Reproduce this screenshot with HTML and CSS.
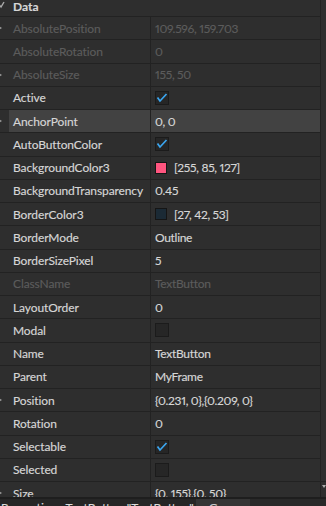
FILE: index.html
```html
<!DOCTYPE html>
<html>
<head>
<meta charset="utf-8">
<link rel="stylesheet" href="styles.css">
</head>
<body>
<div class="panel">
  <div class="list">
    <div class="header">
      <span class="chev"><svg width="9" height="10" viewBox="0 0 9 10"><polyline points="-3,2 1,7 4,2" fill="none" stroke="#aaaaaa" stroke-width="1.4"/></svg></span>
      <span class="title">Data</span>
    </div>
    <div class="row off"><span class="exp"><i></i></span><span class="name">AbsolutePosition</span><span class="val">109.596, 159.703</span></div>
    <div class="row off"><span class="exp"></span><span class="name">AbsoluteRotation</span><span class="val">0</span></div>
    <div class="row off"><span class="exp"><i></i></span><span class="name">AbsoluteSize</span><span class="val">155, 50</span></div>
    <div class="row"><span class="exp"></span><span class="name">Active</span><span class="val"><span class="box"><svg width="12" height="12" viewBox="0 0 12 12"><polyline points="1.5,5.5 4,9 10.5,2" fill="none" stroke="#3ba6f0" stroke-width="1.7"/></svg></span></span></div>
    <div class="row hover"><span class="exp"><i></i></span><span class="name">AnchorPoint</span><span class="val">0, 0</span></div>
    <div class="row"><span class="exp"></span><span class="name">AutoButtonColor</span><span class="val"><span class="box"><svg width="12" height="12" viewBox="0 0 12 12"><polyline points="1.5,5.5 4,9 10.5,2" fill="none" stroke="#3ba6f0" stroke-width="1.7"/></svg></span></span></div>
    <div class="row"><span class="exp"></span><span class="name">BackgroundColor3</span><span class="val"><span class="swatch pink"></span>[255, 85, 127]</span></div>
    <div class="row"><span class="exp"></span><span class="name">BackgroundTransparency</span><span class="val">0.45</span></div>
    <div class="row"><span class="exp"></span><span class="name">BorderColor3</span><span class="val"><span class="swatch navy"></span>[27, 42, 53]</span></div>
    <div class="row"><span class="exp"></span><span class="name">BorderMode</span><span class="val">Outline</span></div>
    <div class="row"><span class="exp"></span><span class="name">BorderSizePixel</span><span class="val">5</span></div>
    <div class="row off"><span class="exp"></span><span class="name">ClassName</span><span class="val">TextButton</span></div>
    <div class="row"><span class="exp"></span><span class="name">LayoutOrder</span><span class="val">0</span></div>
    <div class="row"><span class="exp"></span><span class="name">Modal</span><span class="val"><span class="box"></span></span></div>
    <div class="row"><span class="exp"></span><span class="name">Name</span><span class="val">TextButton</span></div>
    <div class="row"><span class="exp"></span><span class="name">Parent</span><span class="val">MyFrame</span></div>
    <div class="row"><span class="exp"><i></i></span><span class="name">Position</span><span class="val">{0.231, 0},{0.209, 0}</span></div>
    <div class="row"><span class="exp"></span><span class="name">Rotation</span><span class="val">0</span></div>
    <div class="row"><span class="exp"></span><span class="name">Selectable</span><span class="val"><span class="box"><svg width="12" height="12" viewBox="0 0 12 12"><polyline points="1.5,5.5 4,9 10.5,2" fill="none" stroke="#3ba6f0" stroke-width="1.7"/></svg></span></span></div>
    <div class="row"><span class="exp"></span><span class="name">Selected</span><span class="val"><span class="box"></span></span></div>
    <div class="row"><span class="exp"><i></i></span><span class="name">Size</span><span class="val">{0, 155},{0, 50}</span></div>
  </div>
  <div class="scroll">
    <div class="track"></div>
    <div class="btn"><i></i></div>
  </div>
</div>
<div class="tabs">
  <div class="tab active">Properties - TextButton "TextButton"</div>
  <div class="tab game">Game</div>
</div>
</body>
</html>
```
FILE: styles.css
```css
* {
  box-sizing: border-box;
  margin: 0;
  padding: 0;
}

body {
  margin: 0;
  width: 326px;
  height: 506px;
  overflow: hidden;
  background: #2e2e2e;
  color: #d6d6d6;
  font-family: Lato, "Noto Sans", sans-serif;
  font-size: 12px;
  -webkit-text-stroke: 0.15px currentColor;
}

.panel {
  display: flex;
  height: 497px;
  overflow: hidden;
}

.list {
  flex: 1;
  border-right: 1px solid #222222;
  overflow: hidden;
}

.header {
  margin-top: -6px;
  height: 23px;
  border-bottom: 1px solid #222222;
  display: flex;
  align-items: center;
  font-weight: bold;
}

.chev {
  width: 9px;
  display: flex;
  align-items: center;
  flex: none;
}

.title {
  padding-left: 4px;
  line-height: 9px;
  padding-top: 2px;
}

.row {
  display: flex;
  height: 23.25px;
  border-bottom: 1px solid #222222;
}

.exp {
  width: 9px;
  flex: none;
  display: flex;
  align-items: center;
}

.exp i {
  display: block;
  margin-left: -3px;
  width: 0;
  height: 0;
  border-left: 5px solid #9a9a9a;
  border-top: 3px solid transparent;
  border-bottom: 3px solid transparent;
}

.name {
  width: 142px;
  flex: none;
  border-right: 1px solid #222222;
  padding-left: 4px;
  display: flex;
  align-items: center;
  white-space: nowrap;
  overflow: hidden;
  letter-spacing: -0.1px;
}

.val {
  flex: 1;
  padding-left: 4px;
  display: flex;
  align-items: center;
  white-space: nowrap;
  overflow: hidden;
  letter-spacing: -0.3px;
  font-feature-settings: "pnum";
}

.row.off .name,
.row.off .val {
  color: #5c5c5c;
}

.row.hover .name,
.row.hover .val {
  background: #424242;
}

.box {
  width: 14px;
  height: 14px;
  background: #262626;
  border: 1px solid #1b1b1b;
  display: flex;
  align-items: center;
  justify-content: center;
}

.swatch {
  width: 12px;
  height: 12px;
  border: 1px solid #151515;
  margin-right: 7px;
  flex: none;
}

.swatch.pink {
  background: #ff557f;
}

.swatch.navy {
  background: #1b2a35;
}

.scroll {
  width: 5px;
  display: flex;
  flex-direction: column;
}

.scroll .track {
  flex: 1;
}

.scroll .btn {
  height: 16px;
  border-top: 1px solid #222222;
  display: flex;
  justify-content: center;
  padding-top: 3px;
}

.scroll .btn i {
  display: block;
  width: 0;
  height: 0;
  border-top: 3px solid #aaaaaa;
  border-left: 2.5px solid transparent;
  border-right: 2.5px solid transparent;
}

.tabs {
  display: flex;
  height: 9px;
  background: #292929;
  border-top: 2px solid #1e1e1e;
  overflow: hidden;
}

.tab {
  white-space: nowrap;
  line-height: 14px;
  padding-top: 2px;
}

.tab.active {
  width: 196px;
  padding-left: 1px;
  background: #262626;
  color: #dddddd;
}

.tab.game {
  width: 54px;
  padding-left: 13px;
  background: #353535;
  color: #cccccc;
}
```
